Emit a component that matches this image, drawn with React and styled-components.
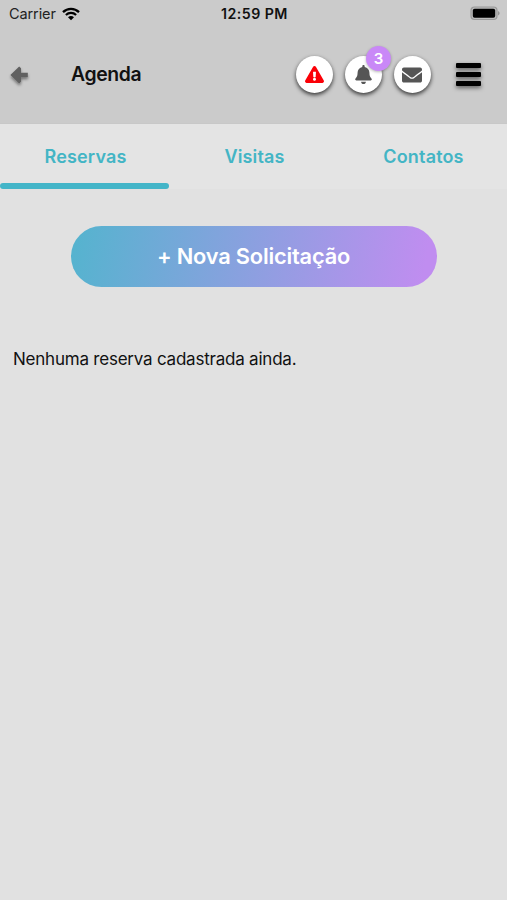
import styled, { createGlobalStyle } from "styled-components";
import { FaBell, FaEnvelope, FaExclamationTriangle } from "react-icons/fa";

const GlobalStyle = createGlobalStyle`
    * {
        box-sizing: border-box;
    }

    body {
        margin: 0;
        background: #e1e1e1;
        color: #111;
        font-family: Inter, "Liberation Sans", sans-serif;
    }

    button {
        border: 0;
        padding: 0;
        background: none;
        font-family: inherit;
    }
`;

const Screen = styled.div`
    display: flex;
    flex-direction: column;
    height: 900px;
    overflow: hidden;
    background: #e1e1e1;
`;

const Top = styled.header`
    height: 124px;
    background: #cbcbcb;
    border-bottom: 1px solid #c8c8c8;
`;

const StatusBar = styled.div`
    display: grid;
    grid-template-columns: 1fr auto 1fr;
    align-items: center;
    height: 27px;
    padding: 0 7px 0 9px;
`;

const Carrier = styled.div`
    display: flex;
    align-items: center;
    gap: 6px;
    font-size: 14.5px;
    letter-spacing: -0.1px;
    color: #222;
`;

const Clock = styled.div`
    font-size: 14.2px;
    font-weight: 600;
    letter-spacing: 0.45px;
`;

const Battery = styled.svg`
    display: block;
    justify-self: end;
`;

const NavBar = styled.div`
    display: flex;
    align-items: center;
    height: 95px;
    padding: 0 26px 0 8px;
`;

const BackButton = styled.button`
    display: flex;
    width: 63px;
    padding-top: 3px;
`;

const Title = styled.h1`
    flex: 1;
    margin: 0 0 2px;
    font-size: 19.4px;
    font-weight: 600;
    letter-spacing: -0.35px;
`;

const Actions = styled.div`
    display: flex;
    gap: 12px;
    margin-right: 25.5px;
`;

const RoundButton = styled.button`
    position: relative;
    display: flex;
    align-items: center;
    justify-content: center;
    width: 37px;
    height: 37px;
    border-radius: 50%;
    background: #fff;
    box-shadow: 0 2px 4px rgba(0, 0, 0, 0.75);
    color: ${(props) => props.$color || "#555"};
`;

const Badge = styled.span`
    position: absolute;
    top: -10px;
    right: -9.5px;
    width: 25px;
    height: 25px;
    border-radius: 50%;
    background: #c988f7;
    box-shadow: 0 1px 3px rgba(0, 0, 0, 0.3);
    color: #fff;
    font-size: 15px;
    font-weight: 600;
    line-height: 25px;
    text-align: center;
`;

const Menu = styled.button`
    display: flex;
    flex-direction: column;
    gap: 4.5px;
    width: 25px;
    filter: drop-shadow(0 2px 2px rgba(0, 0, 0, 0.55));
`;

const MenuLine = styled.span`
    height: 4.5px;
    border-radius: 1px;
    background: #000;
`;

const Tabs = styled.nav`
    display: grid;
    grid-template-columns: repeat(3, 1fr);
    height: 65px;
    background: #e4e4e4;
`;

const Tab = styled.button`
    display: flex;
    flex-direction: column;
    justify-content: flex-end;
    color: #43b5c5;
    font-size: 18px;
    font-weight: 600;
    line-height: 22px;
    letter-spacing: 0.16px;

    &::after {
        content: "";
        width: 100%;
        height: 6px;
        margin-top: 15px;
        border-radius: 3px;
        background: ${(props) => (props.$active ? "#43b5c8" : "transparent")};
    }
`;

const TabLabel = styled.span`
    width: 100%;
    padding-left: 2px;
    text-align: center;
`;

const Content = styled.main`
    display: flex;
    flex-direction: column;
    padding: 36.5px 13px 0;
`;

const NewRequest = styled.button`
    align-self: center;
    width: 366px;
    height: 61px;
    padding-bottom: 1px;
    border-radius: 31px;
    background: linear-gradient(100deg, #56b3cf 2%, #c08df0 96%);
    color: #fff;
    font-size: 21.8px;
    font-weight: 600;
    letter-spacing: -0.18px;
`;

const Empty = styled.p`
    margin: 60px 0 0;
    font-size: 17px;
    line-height: 24px;
    letter-spacing: -0.22px;
`;

function WifiIcon() {
    return (
        <svg width="18" height="14" viewBox="0 0 18 14" fill="none">
            <path d="M1 5.1C5.5.7 12.5.7 17 5.1" stroke="#000" strokeWidth="2.3" />
            <path d="M3.9 8C6.8 5.2 11.2 5.2 14.1 8" stroke="#000" strokeWidth="2.2" />
            <path d="M6 10.2c1.7-1.7 4.3-1.7 6 0l-3 3.1z" fill="#000" />
        </svg>
    );
}

function BatteryIcon() {
    return (
        <Battery width="30" height="15" viewBox="0 0 30 15">
            <rect x="1" y="1" width="26" height="12.5" rx="3.5" fill="#bbb" stroke="#999" strokeWidth="1.2" />
            <rect x="2.8" y="2.8" width="22.4" height="9" rx="1.8" fill="#000" />
            <path d="M28.2 5v4.5c1.8-.7 1.8-3.8 0-4.5z" fill="#888" />
        </Battery>
    );
}

function BackIcon() {
    return (
        <svg width="26" height="28" viewBox="0 0 26 28">
            <defs>
                <filter id="back-shadow" x="-30%" y="-30%" width="160%" height="180%">
                    <feDropShadow dx="0" dy="2" stdDeviation="1.5" floodOpacity="0.45" />
                </filter>
            </defs>
            <g fill="#606060" filter="url(#back-shadow)">
                <path d="M11.2 4.6 2.4 13l8.8 8.4 1.8-1.6v-4.6h6.8v-4.4H13V6.2z" />
            </g>
        </svg>
    );
}

const tabs = ["Reservas", "Visitas", "Contatos"];

function App() {
    return (
        <>
            <GlobalStyle />
            <Screen>
                <Top>
                    <StatusBar>
                        <Carrier>
                            Carrier <WifiIcon />
                        </Carrier>
                        <Clock>12:59 PM</Clock>
                        <BatteryIcon />
                    </StatusBar>
                    <NavBar>
                        <BackButton aria-label="Voltar">
                            <BackIcon />
                        </BackButton>
                        <Title>Agenda</Title>
                        <Actions>
                            <RoundButton $color="#fb0007">
                                <FaExclamationTriangle size={19} />
                            </RoundButton>
                            <RoundButton>
                                <FaBell size={19} />
                                <Badge>3</Badge>
                            </RoundButton>
                            <RoundButton>
                                <FaEnvelope size={20} />
                            </RoundButton>
                        </Actions>
                        <Menu aria-label="Menu">
                            <MenuLine />
                            <MenuLine />
                            <MenuLine />
                        </Menu>
                    </NavBar>
                </Top>
                <Tabs>
                    {tabs.map((tab, i) => (
                        <Tab key={tab} $active={i === 0}>
                            <TabLabel>{tab}</TabLabel>
                        </Tab>
                    ))}
                </Tabs>
                <Content>
                    <NewRequest>+ Nova Solicitação</NewRequest>
                    <Empty>Nenhuma reserva cadastrada ainda.</Empty>
                </Content>
            </Screen>
        </>
    );
}

export default App;
